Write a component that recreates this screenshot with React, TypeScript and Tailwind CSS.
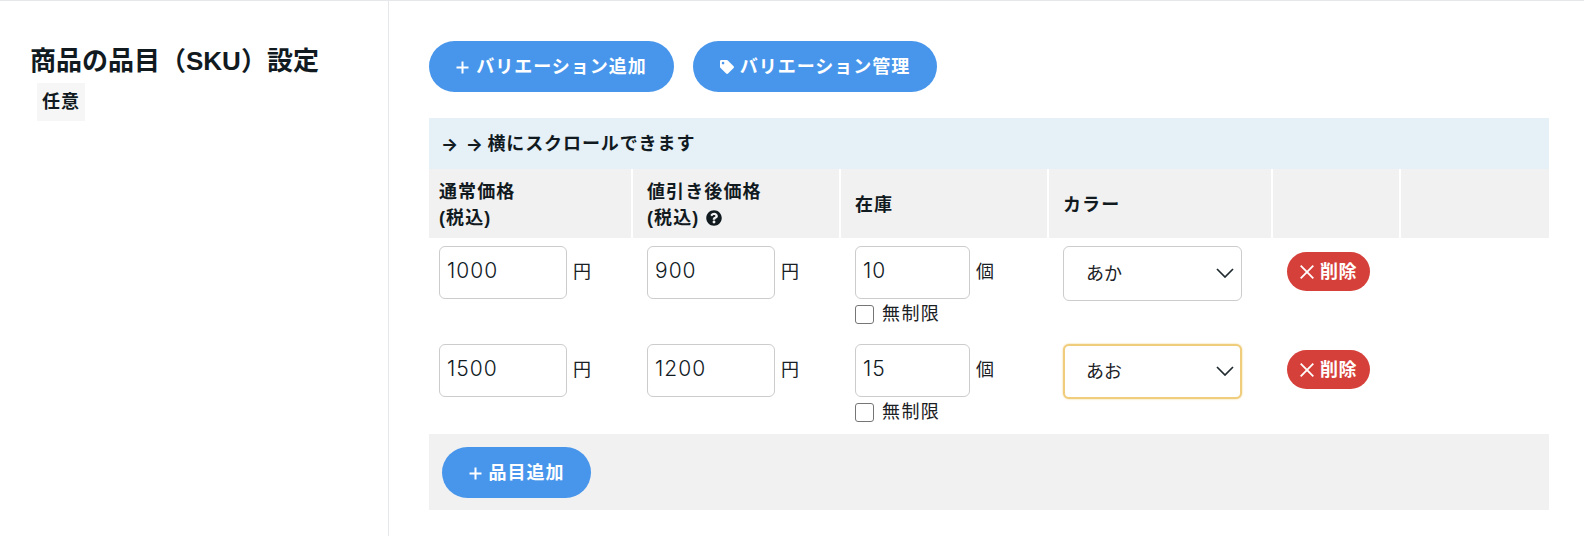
import React from "react";
import { FaTag, FaQuestionCircle } from "react-icons/fa";

const font = { fontFamily: '"Liberation Sans","Noto Sans CJK JP",sans-serif' };

function Plus({ size = 13 }: { size?: number }) {
  return (
    <svg width={size} height={size} viewBox="0 0 13 13" fill="none" stroke="currentColor" strokeWidth="2" className="shrink-0">
      <path d="M6.5 0.5v12M0.5 6.5h12" />
    </svg>
  );
}

function Pill({ children, className }: { children: React.ReactNode; className: string }) {
  return (
    <button className={`flex items-center justify-center rounded-full bg-[#4896ec] pt-[2px] text-[18px] font-bold tracking-[1px] text-white ${className}`}>
      {children}
    </button>
  );
}

function Price({ value, w, unit, pl }: { value: string; w: string; unit: string; pl: string }) {
  return (
    <div className={`flex items-start ${pl}`}>
      <input
        defaultValue={value}
        className={`h-[53px] ${w} rounded-[6px] border border-[#cccccc] bg-white pb-[4px] pl-[7px] font-['Inter'] text-[21px] font-light tracking-[1px] text-[#111a1f] outline-none`}
      />
      <span className="ml-[6px] mt-[16px] text-[18px] leading-[20px] text-[#1a2024]">{unit}</span>
    </div>
  );
}

function Row({ price, sale, stock, color, focused }: { price: string; sale: string; stock: string; color: string; focused?: boolean }) {
  return (
    <div className="grid h-[98px] grid-cols-[202px_206px_206px_222px_126px_148px] gap-x-[2px] pt-[8px]">
      <Price value={price} w="w-[128px]" unit="円" pl="pl-[10px]" />
      <Price value={sale} w="w-[128px]" unit="円" pl="pl-[14px]" />
      <div className="pl-[14px]">
        <Price value={stock} w="w-[115px]" unit="個" pl="" />
        <label className="mt-[5px] flex items-center text-[18px] leading-[20px] tracking-[1.4px] text-[#1a2024]">
          <span className="h-[19px] w-[19px] rounded-[3px] border-[1.5px] border-[#767676] bg-white" />
          <span className="ml-[8px]">無制限</span>
        </label>
      </div>
      <div className="pl-[14px]">
        <div
          className={`relative flex h-[55px] w-[179px] items-center rounded-[6px] bg-white pt-[2px] text-[18px] text-[#1a2024] ${
            focused ? "border-2 border-[#f0cd7c] pl-[21px] shadow-[0_0_2px_#f0cd7c]" : "border border-[#cccccc] pl-[22px]"
          }`}
        >
          {color}
          <svg
            width="18"
            height="10"
            viewBox="0 0 18 10"
            fill="none"
            stroke="#1f2a30"
            strokeWidth="1.7"
            className={focused ? "absolute right-[6px] top-[20px]" : "absolute right-[7px] top-[21px]"}
          >
            <path d="M1 1l8 8 8-8" />
          </svg>
        </div>
      </div>
      <div className="pl-[14px] pt-[6px]">
        <button className="flex h-[39px] w-[83px] items-center justify-center gap-[6px] rounded-full bg-[#d6403a] pt-[2px] text-[18px] font-bold tracking-[0.4px] text-white">
          <svg width="14" height="14" viewBox="0 0 14 14" stroke="currentColor" strokeWidth="1.8" fill="none" className="-mt-[2px]">
            <path d="M0.7 0.7l12.6 12.6M13.3 0.7l-12.6 12.6" />
          </svg>
          削除
        </button>
      </div>
      <div />
    </div>
  );
}

export default function App() {
  return (
    <div style={font} className="flex h-[536px] w-[1584px] border-t border-[#e5e7eb] bg-white text-[#111a1f]">
      <aside className="w-[389px] shrink-0 border-r border-[#e5e7eb] pl-[30px] pt-[44px]">
        <h2 className="text-[26px] font-bold leading-[32px]">商品の品目（SKU）設定</h2>
        <span className="ml-[7px] mt-[6px] inline-block bg-[#f6f6f6] px-[5px] text-[18px] font-bold leading-[38px] tracking-[0.9px]">任意</span>
      </aside>
      <main className="w-[1120px] pl-[40px] pt-[40px]">
        <div className="flex gap-[19px]">
          <Pill className="h-[51px] w-[245px] gap-[7px]">
            <Plus />
            バリエーション追加
          </Pill>
          <Pill className="h-[51px] w-[244px] gap-[6px]">
            <FaTag size={14} className="-mt-[2px]" />
            バリエーション管理
          </Pill>
        </div>
        <div className="mt-[26px] w-[1120px]">
          <div className="flex h-[51px] items-center bg-[#e6f1f7] pl-[12px] pt-[2px] text-[18px] font-bold tracking-[0.9px]">
            <span className="mr-[3px] font-['Inter'] tracking-[1.6px]">→ →</span>
            横にスクロールできます
          </div>
          <div className="grid h-[69px] grid-cols-[202px_206px_206px_222px_126px_148px] gap-x-[2px] text-[18px] font-bold leading-[26px] tracking-[1.1px]">
            <div className="flex flex-col justify-center bg-[#f1f1f1] pl-[10px] pt-[2px]">
              <span>通常価格</span>
              <span>(税込)</span>
            </div>
            <div className="flex flex-col justify-center bg-[#f1f1f1] pl-[14px] pt-[2px]">
              <span>値引き後価格</span>
              <span className="flex items-center gap-[7px]">
                (税込)
                <FaQuestionCircle size={16} />
              </span>
            </div>
            <div className="flex items-center bg-[#f1f1f1] pl-[14px] pt-[2px]">在庫</div>
            <div className="flex items-center bg-[#f1f1f1] pl-[14px] pt-[2px]">カラー</div>
            <div className="bg-[#f1f1f1]" />
            <div className="bg-[#f1f1f1]" />
          </div>
          <Row price="1000" sale="900" stock="10" color="あか" />
          <Row price="1500" sale="1200" stock="15" color="あお" focused />
          <div className="flex h-[76px] items-start bg-[#f1f1f1] pl-[13px] pt-[13px]">
            <Pill className="h-[51px] w-[149px] gap-[7px]">
              <Plus />
              品目追加
            </Pill>
          </div>
        </div>
      </main>
    </div>
  );
}
